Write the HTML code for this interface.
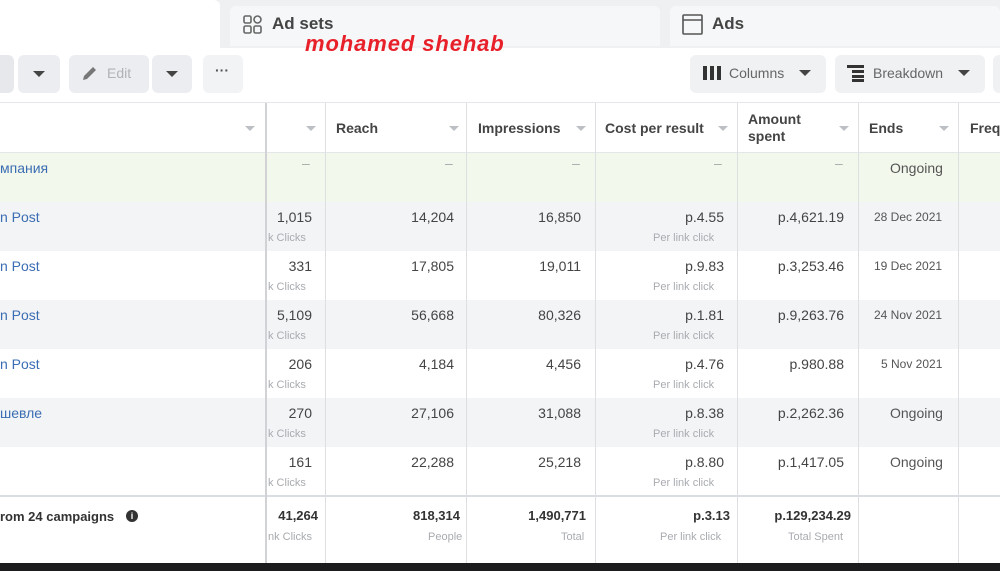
<!DOCTYPE html>
<html><head><meta charset="utf-8"><style>
*{margin:0;padding:0;box-sizing:border-box}
body{width:1000px;height:571px;overflow:hidden;background:#fff;font-family:"Liberation Sans",Arial,sans-serif;position:relative;color:#1c1e21}
.a{position:absolute}
.btn{position:absolute;background:#ebedf0;border-radius:6px;height:38px;top:55px}
.t{position:absolute;font-size:14px;white-space:nowrap}
.r{text-align:right}
.sub{position:absolute;font-size:11px;color:#a8abb0;white-space:nowrap}
.vl{position:absolute;top:103px;width:1px;height:460px;background:#dddfe2}
.car{position:absolute;width:0;height:0;border-left:5px solid transparent;border-right:5px solid transparent;border-top:5px solid #bcc0c4}
.dc{position:absolute;width:0;height:0;border-left:6px solid transparent;border-right:6px solid transparent;border-top:6px solid #444}
.hd{font-size:14px;font-weight:bold;color:#444}
.link{color:#3b6db3}
</style></head><body>
<div class="a" style="left:0;top:0;width:1000px;height:48px;background:#eef0f2"></div>
<div class="a" style="left:0;top:0;width:220px;height:50px;background:#fff;border-top-right-radius:6px"></div>
<div class="a" style="left:230px;top:6px;width:430px;height:40px;background:#f6f7f8;border-radius:6px 6px 0 0"></div>
<div class="a" style="left:670px;top:6px;width:330px;height:40px;background:#f6f7f8;border-radius:6px 6px 0 0"></div>
<svg class="a" style="left:243px;top:15px" width="20" height="20" viewBox="0 0 20 20" fill="none" stroke="#666" stroke-width="1.6"><rect x="1" y="1" width="7" height="7" rx="1.5"/><rect x="11" y="1" width="7" height="7" rx="3.5"/><rect x="1" y="11" width="7" height="7" rx="1.5"/><rect x="11" y="11" width="7" height="7" rx="1.5"/></svg>
<div class="t" style="left:272px;top:14px;font-size:17px;font-weight:bold;color:#444">Ad sets</div>
<svg class="a" style="left:682px;top:14px" width="22" height="22" viewBox="0 0 22 22" fill="none" stroke="#555" stroke-width="1.6"><rect x="1" y="1" width="19" height="19" rx="1"/><line x1="1" y1="6" x2="20" y2="6"/></svg>
<div class="t" style="left:712px;top:14px;font-size:17px;font-weight:bold;color:#444">Ads</div>
<div class="t" style="left:305px;top:31px;font-size:22px;letter-spacing:0.9px;font-weight:bold;font-style:italic;color:#e8202a">mohamed shehab</div>

<div class="btn" style="left:-10px;width:24px;background:#e6e8eb"></div>
<div class="btn" style="left:18px;width:42px"></div><div class="dc" style="left:33px;top:71px"></div>
<div class="btn" style="left:69px;width:80px"></div>
<svg class="a" style="left:81px;top:64px" width="18" height="18" viewBox="0 0 18 18"><path d="M2 16l1-4 9-9 3 3-9 9z" fill="#777"/></svg>
<div class="t" style="left:107px;top:65px;color:#b0b3b8">Edit</div>
<div class="btn" style="left:152px;width:40px"></div><div class="dc" style="left:166px;top:71px"></div>
<div class="btn" style="left:203px;width:40px;background:#f2f3f5"></div>
<div class="t" style="left:215px;top:62px;font-weight:bold;color:#555">···</div>
<div class="btn" style="left:690px;width:136px;background:#f0f1f3"></div>
<svg class="a" style="left:703px;top:66px" width="18" height="14"><rect x="0" y="0" width="4" height="14" fill="#333"/><rect x="7" y="0" width="4" height="14" fill="#333"/><rect x="14" y="0" width="4" height="14" fill="#333"/></svg>
<div class="t" style="left:729px;top:65px;color:#666">Columns</div><div class="dc" style="left:799px;top:70px"></div>
<div class="btn" style="left:835px;width:150px;background:#f0f1f3"></div>
<svg class="a" style="left:847px;top:64px" width="18" height="18"><rect x="0" y="1" width="17" height="3" fill="#333"/><rect x="5" y="6" width="12" height="3" fill="#333"/><rect x="5" y="11" width="12" height="3" fill="#333"/><rect x="5" y="15" width="12" height="3" fill="#333"/></svg>
<div class="t" style="left:873px;top:65px;color:#666">Breakdown</div><div class="dc" style="left:958px;top:70px"></div>
<div class="btn" style="left:993px;width:20px;background:#f0f1f3"></div>

<div class="a" style="left:0;top:102px;width:1000px;height:1px;background:#e4e6ea"></div>
<div class="a" style="left:0;top:152px;width:1000px;height:50px;background:#f3f8ec"></div>
<div class="a" style="left:0;top:202px;width:1000px;height:49px;background:#f3f4f6"></div>
<div class="a" style="left:0;top:300px;width:1000px;height:49px;background:#f3f4f6"></div>
<div class="a" style="left:0;top:398px;width:1000px;height:49px;background:#f3f4f6"></div>
<div class="a" style="left:0;top:152px;width:1000px;height:1px;background:#e4e6ea"></div>
<div class="a" style="left:0;top:495px;width:1000px;height:2px;background:#dadde1"></div>
<div class="a" style="left:0;top:563px;width:1000px;height:8px;background:#1c1c1e"></div>
<div class="vl" style="left:265px;width:2px;background:#d0d2d6"></div>
<div class="vl" style="left:325px"></div><div class="vl" style="left:466px"></div>
<div class="vl" style="left:595px"></div><div class="vl" style="left:737px"></div>
<div class="vl" style="left:858px"></div><div class="vl" style="left:958px"></div>

<div class="car" style="left:245px;top:126px"></div><div class="car" style="left:306px;top:126px"></div>
<div class="t hd" style="left:336px;top:120px">Reach</div><div class="car" style="left:449px;top:126px"></div>
<div class="t hd" style="left:478px;top:120px">Impressions</div><div class="car" style="left:576px;top:126px"></div>
<div class="t hd" style="left:605px;top:120px">Cost per result</div><div class="car" style="left:718px;top:126px"></div>
<div class="t hd" style="left:748px;top:111px;line-height:17px">Amount<br>spent</div><div class="car" style="left:839px;top:126px"></div>
<div class="t hd" style="left:869px;top:120px">Ends</div><div class="car" style="left:939px;top:126px"></div>
<div class="t hd" style="left:970px;top:120px">Freq</div>

<div class="t link" style="left:0;top:160px">мпания</div>
<div class="t" style="left:302px;top:155px;color:#aaa">–</div><div class="t" style="left:445px;top:155px;color:#aaa">–</div>
<div class="t" style="left:572px;top:155px;color:#aaa">–</div><div class="t" style="left:714px;top:155px;color:#aaa">–</div>
<div class="t" style="left:835px;top:155px;color:#aaa">–</div>
<div class="t" style="left:890px;top:160px;color:#555">Ongoing</div>

<div class="t link" style="left:0;top:209px">n Post</div><div class="t r" style="left:250px;width:62px;top:209px;color:#444">1,015</div><div class="sub" style="left:268px;top:232px">k Clicks</div><div class="t r" style="left:380px;width:74px;top:209px;color:#444">14,204</div><div class="t r" style="left:500px;width:81px;top:209px;color:#444">16,850</div><div class="t r" style="left:640px;width:84px;top:209px;color:#444">p.4.55</div><div class="sub" style="left:653px;top:232px">Per link click</div><div class="t r" style="left:750px;width:94px;top:209px;color:#444">p.4,621.19</div><div class="t" style="left:874px;top:210px;font-size:12px;color:#555">28 Dec 2021</div>
<div class="t link" style="left:0;top:258px">n Post</div><div class="t r" style="left:250px;width:62px;top:258px;color:#444">331</div><div class="sub" style="left:268px;top:281px">k Clicks</div><div class="t r" style="left:380px;width:74px;top:258px;color:#444">17,805</div><div class="t r" style="left:500px;width:81px;top:258px;color:#444">19,011</div><div class="t r" style="left:640px;width:84px;top:258px;color:#444">p.9.83</div><div class="sub" style="left:653px;top:281px">Per link click</div><div class="t r" style="left:750px;width:94px;top:258px;color:#444">p.3,253.46</div><div class="t" style="left:874px;top:259px;font-size:12px;color:#555">19 Dec 2021</div>
<div class="t link" style="left:0;top:307px">n Post</div><div class="t r" style="left:250px;width:62px;top:307px;color:#444">5,109</div><div class="sub" style="left:268px;top:330px">k Clicks</div><div class="t r" style="left:380px;width:74px;top:307px;color:#444">56,668</div><div class="t r" style="left:500px;width:81px;top:307px;color:#444">80,326</div><div class="t r" style="left:640px;width:84px;top:307px;color:#444">p.1.81</div><div class="sub" style="left:653px;top:330px">Per link click</div><div class="t r" style="left:750px;width:94px;top:307px;color:#444">p.9,263.76</div><div class="t" style="left:874px;top:308px;font-size:12px;color:#555">24 Nov 2021</div>
<div class="t link" style="left:0;top:356px">n Post</div><div class="t r" style="left:250px;width:62px;top:356px;color:#444">206</div><div class="sub" style="left:268px;top:379px">k Clicks</div><div class="t r" style="left:380px;width:74px;top:356px;color:#444">4,184</div><div class="t r" style="left:500px;width:81px;top:356px;color:#444">4,456</div><div class="t r" style="left:640px;width:84px;top:356px;color:#444">p.4.76</div><div class="sub" style="left:653px;top:379px">Per link click</div><div class="t r" style="left:750px;width:94px;top:356px;color:#444">p.980.88</div><div class="t" style="left:881px;top:357px;font-size:12px;color:#555">5 Nov 2021</div>
<div class="t link" style="left:0;top:405px">шевле</div><div class="t r" style="left:250px;width:62px;top:405px;color:#444">270</div><div class="sub" style="left:268px;top:428px">k Clicks</div><div class="t r" style="left:380px;width:74px;top:405px;color:#444">27,106</div><div class="t r" style="left:500px;width:81px;top:405px;color:#444">31,088</div><div class="t r" style="left:640px;width:84px;top:405px;color:#444">p.8.38</div><div class="sub" style="left:653px;top:428px">Per link click</div><div class="t r" style="left:750px;width:94px;top:405px;color:#444">p.2,262.36</div><div class="t" style="left:890px;top:405px;color:#555">Ongoing</div>
<div class="t r" style="left:250px;width:62px;top:454px;color:#444">161</div><div class="sub" style="left:268px;top:477px">k Clicks</div><div class="t r" style="left:380px;width:74px;top:454px;color:#444">22,288</div><div class="t r" style="left:500px;width:81px;top:454px;color:#444">25,218</div><div class="t r" style="left:640px;width:84px;top:454px;color:#444">p.8.80</div><div class="sub" style="left:653px;top:477px">Per link click</div><div class="t r" style="left:750px;width:94px;top:454px;color:#444">p.1,417.05</div><div class="t" style="left:890px;top:454px;color:#555">Ongoing</div>

<div class="t" style="left:0;top:509px;font-size:13px;font-weight:bold;color:#333">rom 24 campaigns</div>
<div class="a" style="left:126px;top:510px;width:12px;height:12px;border-radius:50%;background:#333;color:#fff;font-size:9px;text-align:center;line-height:12px;font-weight:bold">i</div>
<div class="t r" style="left:240px;width:78px;top:508px;font-weight:bold;color:#333;font-size:13px">41,264</div><div class="sub" style="left:268px;top:531px">nk Clicks</div>
<div class="t r" style="left:380px;width:80px;top:508px;font-weight:bold;color:#333;font-size:13px">818,314</div><div class="sub" style="left:428px;top:531px">People</div>
<div class="t r" style="left:490px;width:96px;top:508px;font-weight:bold;color:#333;font-size:13px">1,490,771</div><div class="sub" style="left:561px;top:531px">Total</div>
<div class="t r" style="left:640px;width:90px;top:508px;font-weight:bold;color:#333;font-size:13px">p.3.13</div><div class="sub" style="left:660px;top:531px">Per link click</div>
<div class="t r" style="left:750px;width:101px;top:508px;font-weight:bold;color:#333;font-size:13px">p.129,234.29</div><div class="sub" style="left:788px;top:531px">Total Spent</div>
</body></html>
